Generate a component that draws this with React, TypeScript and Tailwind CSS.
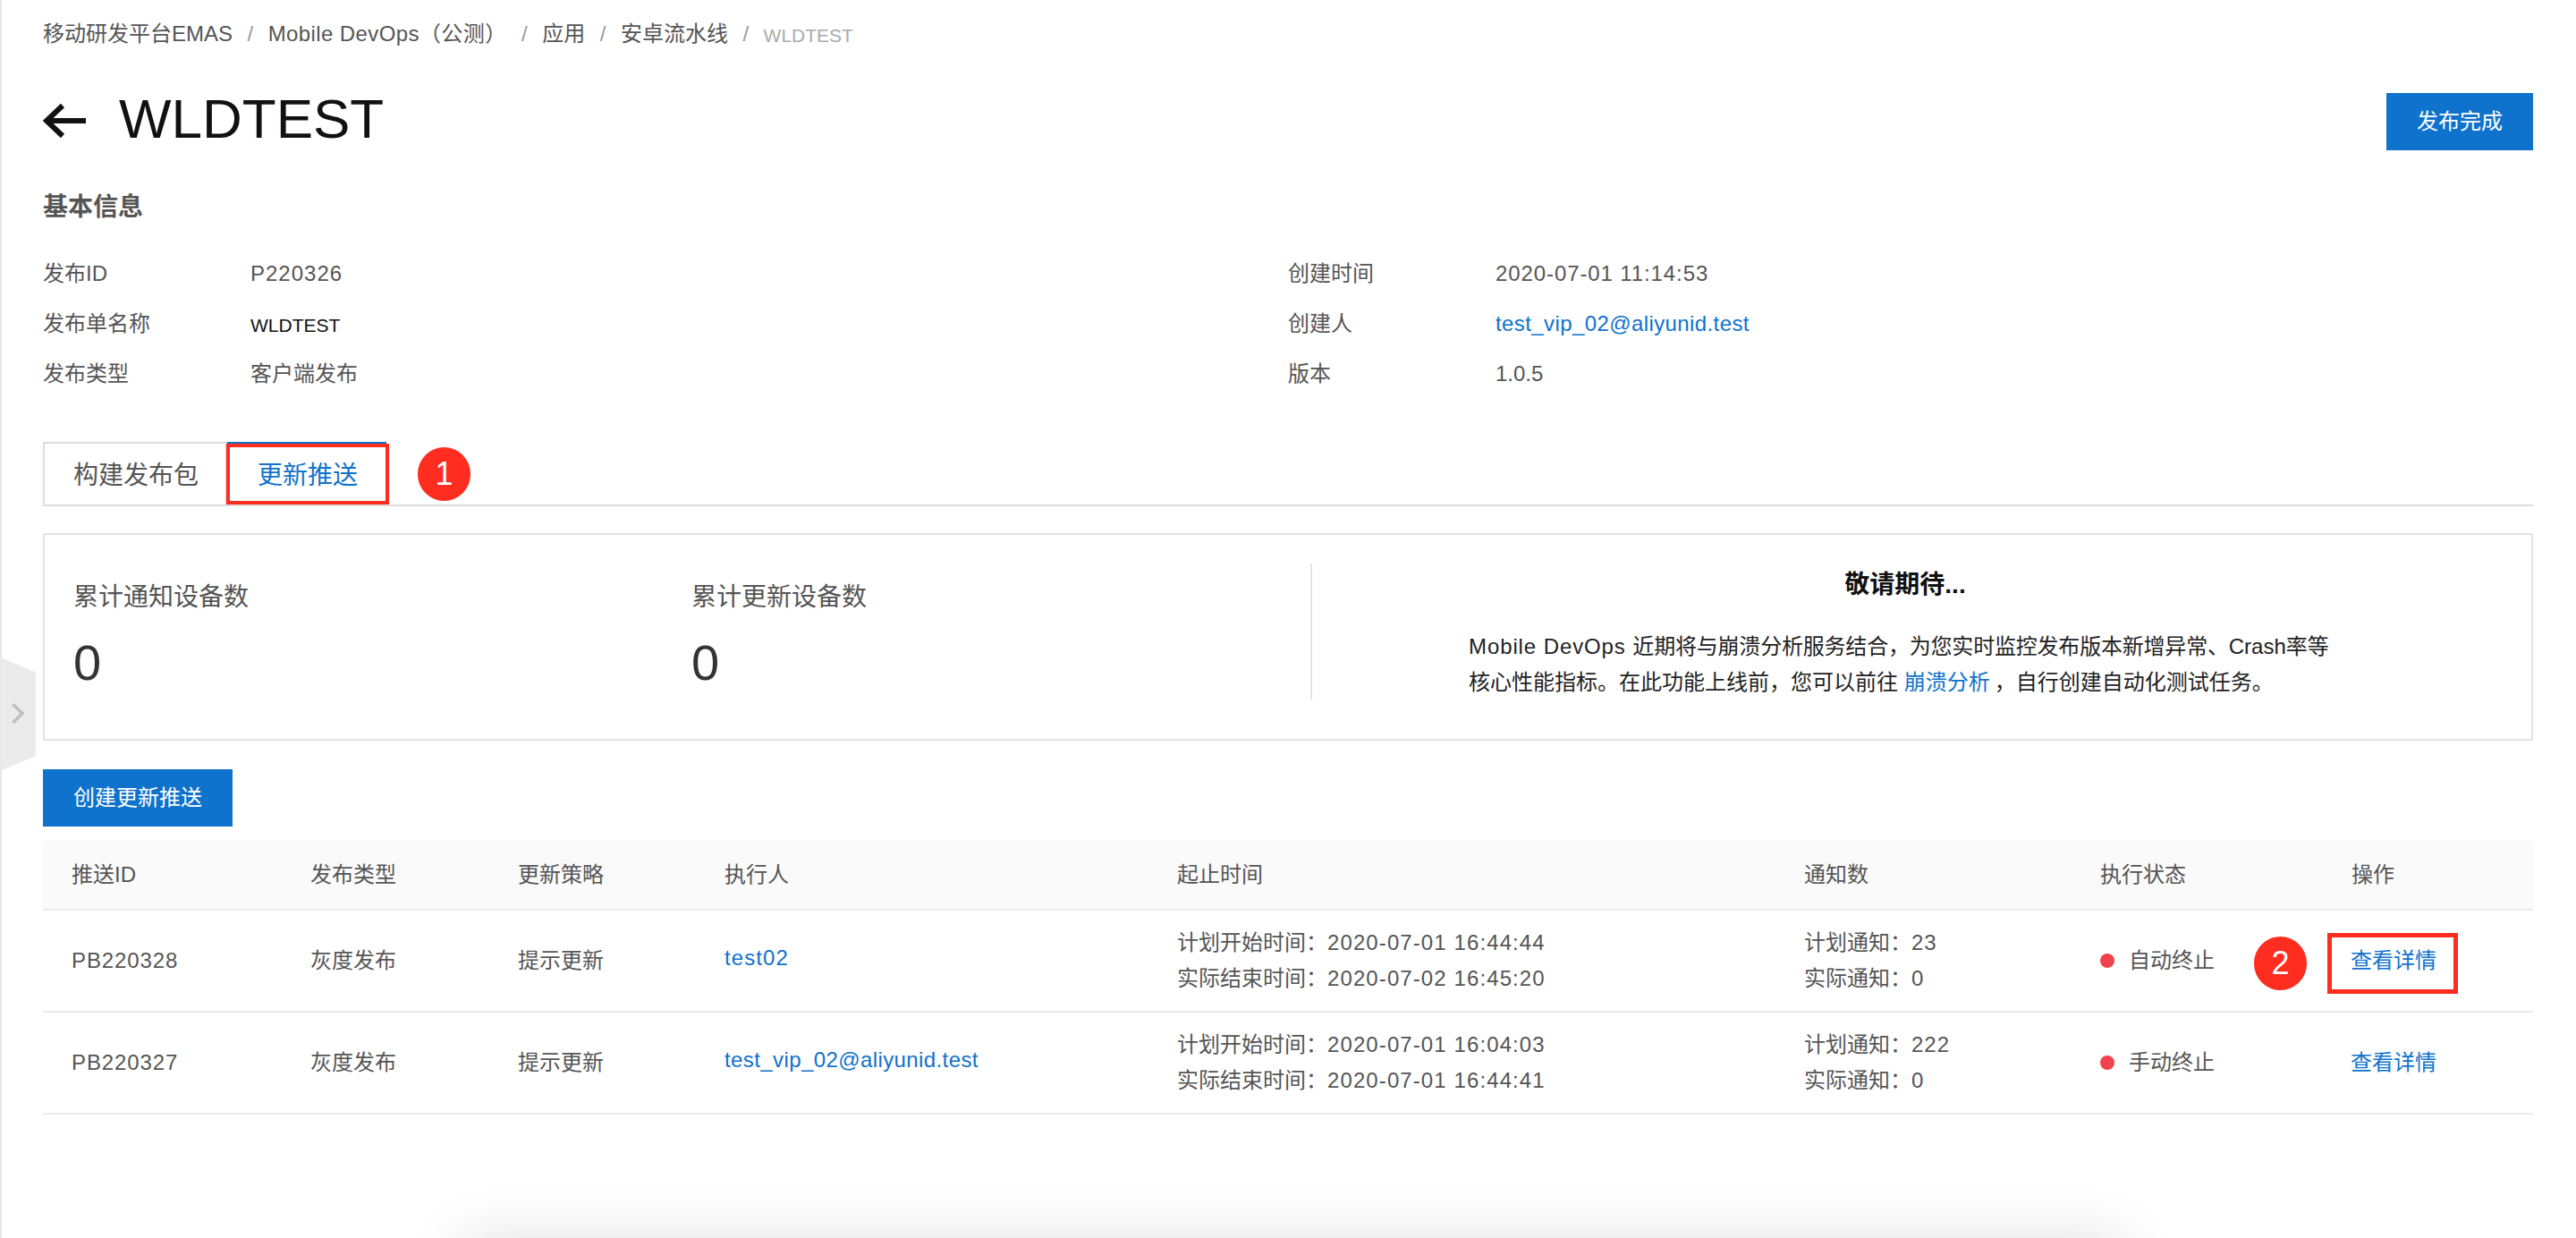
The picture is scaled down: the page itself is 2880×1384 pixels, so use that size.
const FONT = "font-['Liberation_Sans','Noto_Sans_CJK_SC',sans-serif]";

const infoLeft = [
  { label: "发布ID", value: "P220326", spacing: "tracking-[1px]" },
  { label: "发布单名称", value: "WLDTEST", dark: true },
  { label: "发布类型", value: "客户端发布" },
];

const infoRight = [
  { label: "创建时间", value: "2020-07-01 11:14:53", spacing: "tracking-[0.9px]" },
  { label: "创建人", value: "test_vip_02@aliyunid.test", link: true, spacing: "tracking-[0.4px]" },
  { label: "版本", value: "1.0.5" },
];

const rows = [
  {
    id: "PB220328",
    user: "test02",
    userSpacing: "tracking-[1.1px]",
    start: "2020-07-01 16:44:44",
    end: "2020-07-02 16:45:20",
    plan: "23",
    status: "自动终止",
  },
  {
    id: "PB220327",
    user: "test_vip_02@aliyunid.test",
    userSpacing: "tracking-[0.4px]",
    start: "2020-07-01 16:04:03",
    end: "2020-07-01 16:44:41",
    plan: "222",
    status: "手动终止",
  },
];

const columns = "grid grid-cols-[267px_232px_231px_506px_701px_331px_281px_235px]";

function Badge({ n, className }: { n: string; className: string }) {
  return (
    <div
      className={`absolute flex h-[60px] w-[59px] items-center justify-center rounded-full bg-[#ff2d20] text-[36px] text-white ${className}`}
    >
      {n}
    </div>
  );
}

function InfoColumn({ items }: { items: any[] }) {
  return (
    <div className="flex flex-col">
      {items.map((item) => (
        <div key={item.label} className="flex h-[56px] items-center">
          <div className="w-[232px] text-[#555]">{item.label}</div>
          {item.link ? (
            <a className={`text-[#0f72cc] ${item.spacing}`}>{item.value}</a>
          ) : item.dark ? (
            <div className="mt-[4px] text-[21px] text-[#111]">{item.value}</div>
          ) : (
            <div className={`text-[#555] ${item.spacing ?? ""}`}>{item.value}</div>
          )}
        </div>
      ))}
    </div>
  );
}

function Separator() {
  return <span className="mx-[16.5px] text-[#999]">/</span>;
}

export default function App() {
  return (
    <div className={`${FONT} relative h-[1384px] w-[2880px] overflow-hidden border-l-2 border-[#e8e8e8] bg-white pl-[46px] pr-[48px] pt-[18px] text-[24px] leading-[40px]`}>
      {/* collapse handle */}
      <div className="absolute left-[-2px] top-[735px] h-[127px] w-[40px] bg-[#ebebeb] [clip-path:polygon(0_0,100%_13%,100%_86.6%,0_100%)]" />
      <svg className="absolute left-[10px] top-[784px]" width="16" height="28" viewBox="0 0 16 28" fill="none">
        <path d="M2.5 3.5L13 13.5L2.5 24" stroke="#bfbfbf" strokeWidth="3.5" />
      </svg>

      {/* breadcrumb */}
      <div className="flex h-[40px] items-center text-[#555]">
        <span>移动研发平台EMAS</span>
        <Separator />
        <span className="tracking-[0.4px]">Mobile DevOps（公测）</span>
        <Separator />
        <span>应用</span>
        <Separator />
        <span>安卓流水线</span>
        <Separator />
        <span className="mt-[4px] text-[21px] text-[#aaa]">WLDTEST</span>
      </div>

      {/* title */}
      <div className="mt-[46px] flex h-[64px] items-center justify-between">
        <div className="flex items-center">
          <svg className="-mt-[2px]" width="50" height="40" viewBox="0 0 50 40" fill="none">
            <path d="M22 3L4 20l18 17M4 20h44" stroke="#111" strokeWidth="6" />
          </svg>
          <h1 className="-mt-[6px] ml-[35px] text-[62px] leading-[64px] text-[#111]">WLDTEST</h1>
        </div>
        <button className="h-[64px] w-[164px] bg-[#0f72cc] text-white">发布完成</button>
      </div>

      {/* basic info */}
      <h2 className="mt-[44px] h-[40px] text-[28px] font-bold text-[#555]">基本信息</h2>
      <div className="mt-[26px] grid grid-cols-[1392px_1fr]">
        <InfoColumn items={infoLeft} />
        <InfoColumn items={infoRight} />
      </div>

      {/* tabs */}
      <div className="mt-[48px] flex h-[72px] border-b-2 border-[#ddd] text-[28px]">
        <div className="flex h-[72px] w-[206px] items-center justify-center border-2 border-[#ddd] pl-[2px] pt-[4px] text-[#555]">
          构建发布包
        </div>
        <div className="flex h-[70px] w-[178px] items-center justify-center border-t-4 border-[#0f72cc] pl-[2px] pt-[2px] text-[#0f72cc]">
          更新推送
        </div>
      </div>
      <div className="absolute left-[251px] top-[496px] h-[68px] w-[182px] border-4 border-[#ff2d20]" />
      <Badge n="1" className="left-[465px] top-[500px]" />

      {/* stats */}
      <div className="mt-[30px] flex h-[232px] border-2 border-[#e3e3e3]">
        <div className="flex w-[1415px] items-center pb-[3px] pl-[32px]">
          <div className="w-[691px]">
            <div className="text-[28px] text-[#555]">累计通知设备数</div>
            <div className="mt-[21px] text-[56px] leading-[64px] text-[#333]">0</div>
          </div>
          <div className="w-[691px]">
            <div className="text-[28px] text-[#555]">累计更新设备数</div>
            <div className="mt-[21px] text-[56px] leading-[64px] text-[#333]">0</div>
          </div>
        </div>
        <div className="mt-[32px] h-[152px] w-[2px] bg-[#e3e3e3]" />
        <div className="flex w-[1330px] flex-col items-center pt-[36px] text-[#222]">
          <div className="mr-[4px] text-[28px] font-bold text-[#111]">敬请期待...</div>
          <p className="mt-[29px] w-[980px]">
            <span className="tracking-[0.9px]">Mobile DevOps </span><span className="tracking-[-0.2px]">近期将与崩溃分析服务结合，为您实时监控发布版本新增异常、</span>Crash率等
            <br />
            核心性能指标。在此功能上线前，您可以前往 <a className="mr-[5px] text-[#0f72cc]">崩溃分析</a>，自行创建自动化测试任务。
          </p>
        </div>
      </div>

      <button className="mt-[32px] block h-[64px] w-[212px] bg-[#0f72cc] text-white">创建更新推送</button>

      {/* table */}
      <div className="mt-[16px] text-[#555]">
        <div className={`${columns} h-[78px] items-center border-b-2 border-[#eaeaea] bg-[#fafafa] pl-[32px]`}>
          {["推送ID", "发布类型", "更新策略", "执行人", "起止时间", "通知数", "执行状态", "操作"].map((h) => (
            <div key={h}>{h}</div>
          ))}
        </div>
        {rows.map((r) => (
          <div key={r.id} className={`${columns} h-[114px] items-center border-b-2 border-[#eaeaea] pl-[32px]`}>
            <div className="tracking-[0.9px]">{r.id}</div>
            <div>灰度发布</div>
            <div>提示更新</div>
            <a className={`-mt-[6px] text-[#0f72cc] ${r.userSpacing}`}>{r.user}</a>
            <div>
              <div>计划开始时间：<span className="tracking-[1.1px]">{r.start}</span></div>
              <div>实际结束时间：<span className="tracking-[1.1px]">{r.end}</span></div>
            </div>
            <div>
              <div>计划通知：<span className="tracking-[1px]">{r.plan}</span></div>
              <div>实际通知：0</div>
            </div>
            <div className="flex items-center">
              <span className="mr-[16px] h-[16px] w-[16px] rounded-full bg-[#f0424a]" />
              {r.status}
            </div>
            <a className="-ml-[1px] text-[#0f72cc]">查看详情</a>
          </div>
        ))}
      </div>
      <div className="absolute left-[2600px] top-[1043px] h-[68px] w-[146px] border-[5px] border-[#ff2d20]" />
      <Badge n="2" className="left-[2518px] top-[1047px]" />

      {/* dialog shadow coming from below the fold */}
      <div className="absolute left-[518px] top-[1390px] h-[200px] w-[1850px] rounded-[8px] shadow-[0_0_70px_rgba(0,0,0,0.15)]" />
    </div>
  );
}
